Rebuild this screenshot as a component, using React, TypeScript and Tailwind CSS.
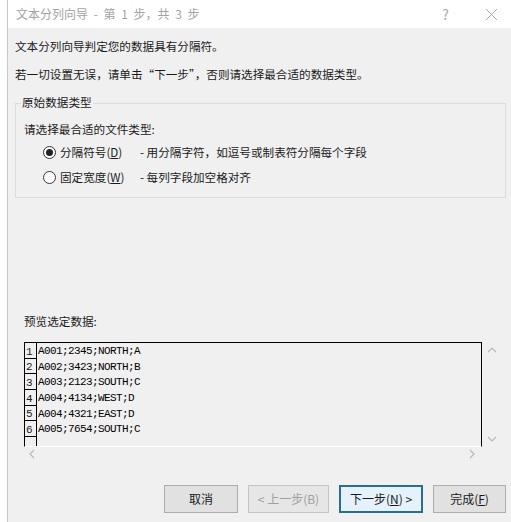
import React from "react";

const cjk = { fontFamily: '"Noto Sans CJK SC", "Noto Sans", sans-serif' };
const mono = { fontFamily: '"Liberation Mono", "DejaVu Sans Mono", monospace' };

const rows = [
  "A001;2345;NORTH;A",
  "A002;3423;NORTH;B",
  "A003;2123;SOUTH;C",
  "A004;4134;WEST;D",
  "A004;4321;EAST;D",
  "A005;7654;SOUTH;C",
];

function Radio({ checked }: { checked?: boolean }) {
  return (
    <span className="w-[13px] h-[13px] rounded-full border border-[#333] bg-white flex items-center justify-center shrink-0">
      {checked && <span className="w-[7px] h-[7px] rounded-full bg-[#222]" />}
    </span>
  );
}

function Chevron({ dir }: { dir: "up" | "down" | "left" | "right" }) {
  const d = {
    up: "M1 6 L5 2 L9 6",
    down: "M1 2 L5 6 L9 2",
    left: "M6 1 L2 5 L6 9",
    right: "M2 1 L6 5 L2 9",
  }[dir];
  const vertical = dir === "up" || dir === "down";
  return (
    <svg width={vertical ? 10 : 8} height={vertical ? 8 : 10} viewBox={vertical ? "0 0 10 8" : "0 0 8 10"}>
      <path d={d} fill="none" stroke="#b9b9b9" strokeWidth="1.2" />
    </svg>
  );
}

export default function App() {
  return (
    <div className="w-[511px] h-[522px] flex bg-white overflow-hidden text-[#1a1a1a]" style={cjk}>
      <div className="w-[8px] h-full bg-white border-r border-[#c9c9c9]" />
      <div className="flex-1 flex flex-col">
        {/* title bar */}
        <div className="h-[28px] bg-white flex items-center pl-[8px] shrink-0">
          <span className="text-[12px] leading-[16px] text-[#a3a3a3] [word-spacing:3px]">
            文本分列向导 - 第 1 步，共 3 步
          </span>
          <span className="ml-auto text-[14px] text-[#a8a8a8] leading-none mr-[36px]">?</span>
          <svg width="13" height="13" viewBox="0 0 13 13" className="mr-[13px]">
            <path d="M1 1 L12 12 M12 1 L1 12" stroke="#a8a8a8" strokeWidth="1" fill="none" />
          </svg>
        </div>

        {/* dialog body */}
        <div className="flex-1 bg-[#f0f0f0] flex flex-col pl-[7px] pr-[5px] pt-[10px] text-[11.6px] leading-[16px]">
          <div>文本分列向导判定您的数据具有分隔符。</div>
          <div className="mt-[12px]">若一切设置无误，请单击“下一步”，否则请选择最合适的数据类型。</div>

          {/* data type group */}
          <div className="relative mt-[21px] h-[95px] border border-[#dcdcdc] pl-[8px] pt-[17px]">
            <span className="absolute left-[5px] top-[-10px] px-[1px] bg-[#f0f0f0]">原始数据类型</span>
            <div>请选择最合适的文件类型:</div>
            <div className="flex items-center mt-[7px] ml-[19px]">
              <Radio checked />
              <span className="ml-[4px] w-[80px]">
                分隔符号(<span className="underline">D</span>)
              </span>
              <span>- 用分隔字符，如逗号或制表符分隔每个字段</span>
            </div>
            <div className="flex items-center mt-[9px] ml-[19px]">
              <Radio />
              <span className="ml-[4px] w-[80px]">
                固定宽度(<span className="underline">W</span>)
              </span>
              <span>- 每列字段加空格对齐</span>
            </div>
          </div>

          {/* preview */}
          <div className="mt-[115px] ml-[9px]">预览选定数据:</div>
          <div className="ml-[9px] mt-[13px] flex">
            <div className="w-[458px] h-[105px] border-t border-l border-r border-black border-b border-b-white flex">
              <div className="w-[12px] flex flex-col border-r border-black">
                {rows.map((_, i) => (
                  <div
                    key={i}
                    className="h-[15.7px] border-b border-black text-[11px] leading-[11px] flex items-end pl-[1px]"
                    style={mono}
                  >
                    {i + 1}
                  </div>
                ))}
              </div>
              <div className="flex flex-col pl-[1px]">
                {rows.map((r) => (
                  <div
                    key={r}
                    className="h-[15.7px] text-[11px] leading-[15.7px] tracking-[-0.6px] pt-[1px] text-black"
                    style={mono}
                  >
                    {r}
                  </div>
                ))}
              </div>
            </div>
            <div className="w-[18px] h-[105px] flex flex-col items-center justify-between py-[4px] pl-[2px]">
              <Chevron dir="up" />
              <Chevron dir="down" />
            </div>
          </div>
          <div className="ml-[9px] w-[458px] h-[14px] flex items-center justify-between px-[4px] pr-[6px]">
            <Chevron dir="left" />
            <Chevron dir="right" />
          </div>

          {/* buttons */}
          <div className="mt-[24px] flex justify-end gap-[10px] text-[12px]">
            <button className="w-[74px] h-[28px] bg-[#e1e1e1] border border-[#adadad]">取消</button>
            <button className="w-[81px] h-[28px] bg-[#e6e6e6] border border-[#c4c4c4] text-[#a0a0a0]">
              &lt; 上一步(B)
            </button>
            <button className="w-[84px] h-[28px] bg-[#e5f1fb] border-2 border-[#2b6d8c]">
              下一步(<span className="underline">N</span>) &gt;
            </button>
            <button className="w-[73px] h-[28px] bg-[#e1e1e1] border border-[#adadad]">
              完成(<span className="underline">F</span>)
            </button>
          </div>
        </div>
      </div>
    </div>
  );
}
